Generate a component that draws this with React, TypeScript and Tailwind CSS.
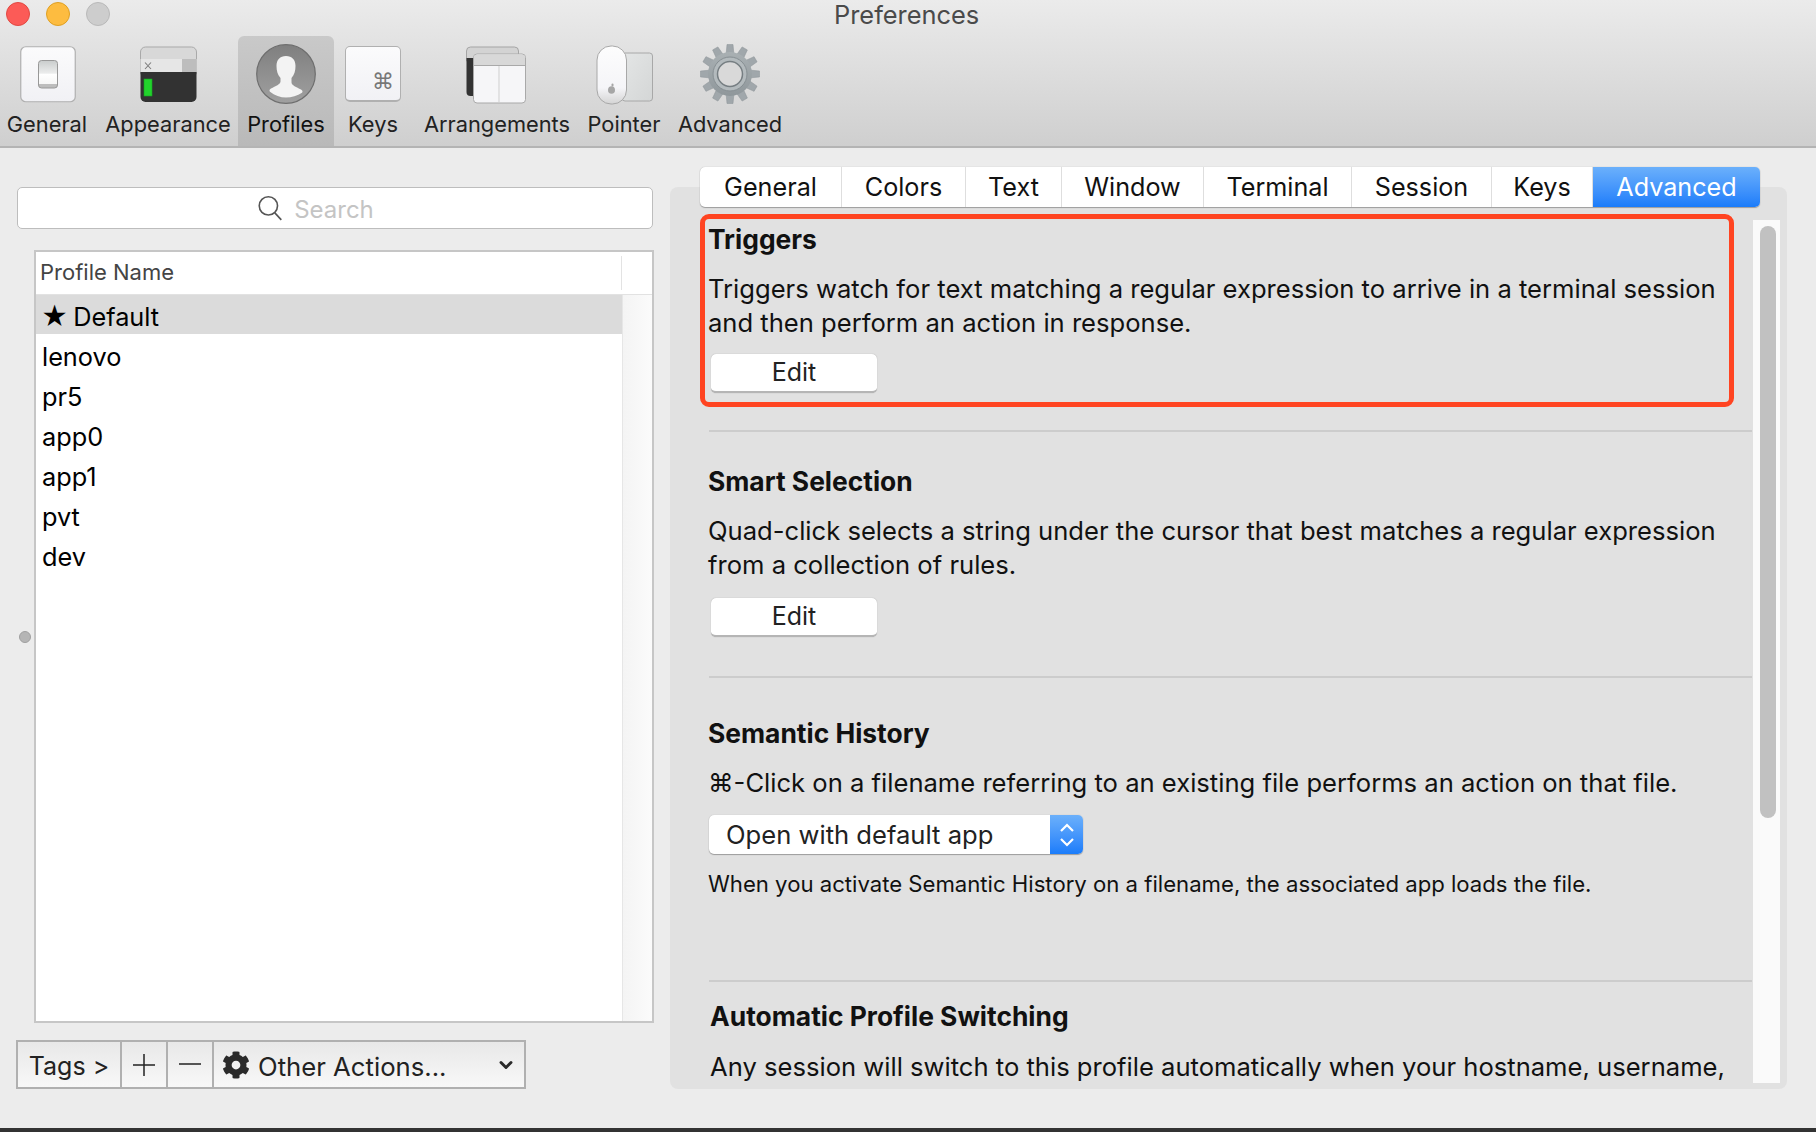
import { FaCog } from "react-icons/fa";
import { ChevronDown } from "lucide-react";

const font = "font-['Inter','DejaVu_Sans',sans-serif]";

function GeneralIcon() {
  return (
    <svg width="56" height="58" viewBox="0 0 56 58">
      <defs>
        <linearGradient id="gk" x1="0" y1="0" x2="0" y2="1"><stop offset="0" stopColor="#fbfbfc" /><stop offset="1" stopColor="#f1f1f5" /></linearGradient>
        <linearGradient id="gs" x1="0" y1="0" x2="0" y2="1"><stop offset="0" stopColor="#c9cccc" /><stop offset="0.47" stopColor="#eceded" /><stop offset="0.48" stopColor="#fff" /><stop offset="0.86" stopColor="#f6f6f6" /><stop offset="0.87" stopColor="#bdbdbd" /></linearGradient>
      </defs>
      <rect x="0.75" y="0.75" width="54.5" height="55" rx="5" fill="url(#gk)" stroke="#b0b0b0" strokeWidth="1.2" />
      <rect x="18.500" y="14.500" width="19" height="27.500" rx="3" fill="url(#gs)" stroke="#989898" strokeWidth="1" />
    </svg>
  );
}

function AppearanceIcon() {
  return (
    <svg width="57" height="58" viewBox="0 0 57 58">
      <path d="M0.5 6a5 5 0 0 1 5-5h46a5 5 0 0 1 5 5v22H0.5z" fill="#d8d8d8" stroke="#a9a9a9" />
      <rect x="0.5" y="13" width="56" height="13" fill="#e6e6e6" />
      <rect x="42" y="13" width="14.500" height="13" fill="#bdbdbd" />
      <path d="M5 16.500l6 6.500M11 16.500l-6 6.500" stroke="#7c7c7c" strokeWidth="1.100" />
      <path d="M0.5 26h56v25a5 5 0 0 1-5 5h-46a5 5 0 0 1-5-5z" fill="#323232" />
      <rect x="4" y="33" width="8" height="17" fill="#22d32c" stroke="#16a322" strokeWidth="0.6" />
    </svg>
  );
}

function ProfilesIcon() {
  return (
    <svg width="60" height="60" viewBox="0 0 60 60">
      <defs>
        <linearGradient id="pb" x1="0" y1="0" x2="0" y2="1"><stop offset="0" stopColor="#7f7f7f" /><stop offset="1" stopColor="#a0a0a0" /></linearGradient>
      </defs>
      <circle cx="30" cy="30" r="29.300" fill="url(#pb)" stroke="#6e6e6e" strokeWidth="1.200" />
      <path d="M30 12c-6 0-9.500 3.800-9.500 10 0 5 1.200 9 4 12v3.500c0 2.800-5 4.700-9.500 7-1.500.8-2 2.200-1 3.200C18.500 51.500 24.500 53.500 30 53.500s11.500-2 16-4.800c1-1 .5-2.400-1-3.200-4.500-2.300-9.500-4.200-9.500-7V34c2.800-3 4-7 4-12 0-6.200-3.500-10-9.500-10z" fill="#f3f3f3" />
    </svg>
  );
}

function KeysIcon() {
  return (
    <div className="w-[56px] h-[56px] rounded-[5px] border border-[#b0b0b0] bg-gradient-to-b from-[#fbfbfc] to-[#f1f1f5] border-b-[2px] flex items-end justify-end pr-[6px] pb-[6px]">
      <span className="text-[22px] leading-[24px] text-[#777] font-['DejaVu_Sans',sans-serif]">⌘</span>
    </div>
  );
}

function ArrangementsIcon() {
  return (
    <svg width="60" height="58" viewBox="0 0 60 58">
      <path d="M0.500 5a4 4 0 0 1 4-4h44a4 4 0 0 1 4 4v10H0.500z" fill="#d3d3d3" stroke="#a5a5a5" />
      <path d="M0.500 12h20v38h-16a4 4 0 0 1-4-4z" fill="#333" />
      <rect x="7.500" y="8" width="52" height="49" rx="3.500" fill="#f6f6f8" stroke="#a9a9a9" />
      <path d="M8 11.500a3 3 0 0 1 3-3h45a3 3 0 0 1 3 3V19H8z" fill="#d8d8d8" />
      <path d="M8 19.500h51" stroke="#a9a9a9" />
      <path d="M33 20v37" stroke="#cfcfcf" />
    </svg>
  );
}

function PointerIcon() {
  return (
    <svg width="58" height="60" viewBox="0 0 58 60">
      <defs>
        <linearGradient id="pm" x1="0" y1="0" x2="0" y2="1"><stop offset="0" stopColor="#fdfdfd" /><stop offset="0.72" stopColor="#f5f5f8" /><stop offset="1" stopColor="#d4d4d4" /></linearGradient>
        <linearGradient id="pp" x1="0" y1="0" x2="1" y2="1"><stop offset="0" stopColor="#e4e6e6" /><stop offset="1" stopColor="#d4d6d6" /></linearGradient>
      </defs>
      <rect x="26" y="8" width="30.500" height="48" rx="3" fill="url(#pp)" stroke="#a8a8a8" />
      <rect x="1" y="1" width="29.500" height="58" rx="14" fill="url(#pm)" stroke="#a8a8a8" />
      <ellipse cx="15.500" cy="45" rx="3.500" ry="3.800" fill="#a6a6a6" />
      <rect x="15.500" y="38.500" width="2" height="3" rx="1" fill="#a6a6a6" />
    </svg>
  );
}

const toothAngles = [0, 30, 60, 90, 120, 150, 180, 210, 240, 270, 300, 330];

function GearIcon() {
  return (
    <svg width="60" height="60" viewBox="0 0 60 60">
      <defs>
        <linearGradient id="gg" x1="0" y1="0" x2="0" y2="1"><stop offset="0" stopColor="#a9b0b3" /><stop offset="1" stopColor="#8f979b" /></linearGradient>
      </defs>
      {toothAngles.map((a) => (
        <path key={a} d="M27 0.500h6l1 11h-8z" fill="#a0a7ab" stroke="#8b9296" strokeWidth="0.500" transform={`rotate(${a} 30 30)`} />
      ))}
      <circle cx="30" cy="30" r="22" fill="url(#gg)" />
      <circle cx="30" cy="30" r="17" fill="#b3babd" stroke="#878f93" strokeWidth="1" />
      <circle cx="30" cy="30" r="12.500" fill="#d9d9d9" stroke="#767e82" strokeWidth="1.500" />
    </svg>
  );
}

function ToolItem({ icon, label, className, selected, iconClass }: { icon: React.ReactNode; label: string; className: string; selected?: boolean; iconClass: string }) {
  return (
    <div className={`flex flex-col items-center h-[110px] shrink-0 ${selected ? "bg-gradient-to-b from-[#c9c9c9] to-[#b9b9b9] rounded-t-[6px] text-[#111]" : "text-[#222]"} ${className}`}>
      <div className={`h-[68px] flex items-start justify-center ${iconClass}`}>{icon}</div>
      <div className="text-[21.8px] leading-[26px] mt-[7px] whitespace-nowrap">{label}</div>
    </div>
  );
}

function Section({ title, children, className }: { title: string; children: React.ReactNode; className?: string }) {
  return (
    <div className={className}>
      <div className="text-[26.4px] leading-[34px] font-bold text-[#111]">{title}</div>
      {children}
    </div>
  );
}

function EditButton() {
  return (
    <div className="w-[166px] h-[39px] rounded-[5px] bg-white border-b-2 border-[#b5b5b5] shadow-[0_0_1px_#999] flex items-center justify-center pt-[1px] text-[25px] text-[#222]">Edit</div>
  );
}

const tabs = [
  { t: "General", w: "w-[142px]" },
  { t: "Colors", w: "w-[124px]" },
  { t: "Text", w: "w-[96px]" },
  { t: "Window", w: "w-[142px]" },
  { t: "Terminal", w: "w-[148px]" },
  { t: "Session", w: "w-[140px]" },
  { t: "Keys", w: "w-[101px]" },
];

const profiles = ["lenovo", "pr5", "app0", "app1", "pvt", "dev"];

export default function App() {
  return (
    <div className={`${font} w-[1816px] h-[1132px] flex flex-col overflow-hidden bg-[#ececec] text-black`}>
      {/* toolbar */}
      <div className="h-[148px] shrink-0 bg-gradient-to-b from-[#ebebeb] to-[#cfcfcf] border-b-2 border-[#b4b4b4] flex flex-col">
        <div className="h-[36px] shrink-0 flex items-start pl-[6px] pt-[2px] gap-[16px]">
          <div className="w-[24px] h-[24px] rounded-full bg-[#fc5b57] border border-[#e14942]" />
          <div className="w-[24px] h-[24px] rounded-full bg-[#fdbc40] border border-[#dfa023]" />
          <div className="w-[24px] h-[24px] rounded-full bg-[#cdcdcd] border border-[#b9b9b9]" />
          <div className="ml-[708px] -mt-[2px] text-[25.4px] leading-[30px] text-[#4a4a4a]">Preferences</div>
        </div>
        <div className="flex items-start">
          <ToolItem icon={<GeneralIcon />} label="General" className="w-[82px] ml-[6px]" iconClass="pt-[10px] pl-[2px]" />
          <ToolItem icon={<AppearanceIcon />} label="Appearance" className="w-[126px] ml-[17px]" iconClass="pt-[10px]" />
          <ToolItem icon={<ProfilesIcon />} label="Profiles" className="w-[96px] ml-[7px]" selected iconClass="pt-[8px]" />
          <ToolItem icon={<KeysIcon />} label="Keys" className="w-[56px] ml-[11px]" iconClass="pt-[10px]" />
          <ToolItem icon={<ArrangementsIcon />} label="Arrangements" className="w-[148px] ml-[22px]" iconClass="pt-[10px] pr-[2px]" />
          <ToolItem icon={<PointerIcon />} label="Pointer" className="w-[78px] ml-[14px]" iconClass="pt-[9px] pl-[2px]" />
          <ToolItem icon={<GearIcon />} label="Advanced" className="w-[100px] ml-[17px]" iconClass="pt-[8px]" />
        </div>
      </div>

      {/* main */}
      <div className="flex-1 min-h-0 flex">
        {/* left */}
        <div className="w-[670px] shrink-0 pt-[39px] flex flex-col">
          <div className="ml-[17px] w-[636px] h-[42px] rounded-[5px] bg-white border border-[#bdbdbd] flex items-center justify-center gap-[10px] pr-[40px]">
            <svg width="28" height="28" viewBox="0 0 26 26" fill="none" stroke="#555" strokeWidth="1.500">
              <circle cx="11.500" cy="11" r="8.500" />
              <path d="M17.500 17.500l6 6.500" />
            </svg>
            <span className="text-[24px] pt-[3px] text-[#c4c4c4]">Search</span>
          </div>
          <div className="mt-[21px] flex items-center">
            <div className="w-[34px] shrink-0 flex justify-center pl-[16px]">
              <div className="w-[12px] h-[12px] shrink-0 rounded-full bg-[#b5b5b5] border border-[#a0a0a0]" />
            </div>
            <div className="w-[620px] h-[773px] border-2 border-[#c6c6c6] bg-white flex flex-col">
              <div className="h-[43px] shrink-0 flex items-center border-b border-[#e2e2e2] py-[4px]">
                <div className="w-[586px] h-full border-r border-[#e3e3e3] flex items-center pl-[4px] pb-[2px] text-[22px] text-[#444]">Profile Name</div>
              </div>
              <div className="flex-1 flex min-h-0">
                <div className="w-[586px] flex flex-col text-[25.3px] leading-[40px]">
                  <div className="h-[39px] bg-[#dbdbdb] pl-[5px] pt-[4px] flex items-center gap-[5px]"><span className="text-[26px]">★</span> Default</div>
                  {profiles.map((p) => (
                    <div key={p} className="h-[40px] pl-[6px] pt-[6px] flex items-center">{p}</div>
                  ))}
                </div>
                <div className="flex-1 bg-gradient-to-r from-[#f4f4f4] to-[#fbfbfb] border-l border-[#e6e6e6]" />
              </div>
            </div>
          </div>
          <div className="mt-[17px] ml-[16px] w-[510px] h-[49px] border-2 border-[#b0b0b0] bg-gradient-to-b from-[#e8e8e8] to-[#f8f8f8] flex text-[#222]">
            <div className="w-[104px] shrink-0 border-r-2 border-[#b0b0b0] flex items-center justify-center pt-[5px] text-[25px]">Tags &gt;</div>
            <div className="w-[46px] shrink-0 border-r-2 border-[#b0b0b0] flex items-center justify-center">
              <svg width="24" height="24" viewBox="0 0 24 24" stroke="#222" strokeWidth="1.500"><path d="M12 1v22M1 12h22" /></svg>
            </div>
            <div className="w-[46px] shrink-0 border-r-2 border-[#b0b0b0] flex items-center justify-center">
              <svg width="24" height="24" viewBox="0 0 24 24" stroke="#222" strokeWidth="1.500"><path d="M1 11h22" /></svg>
            </div>
            <div className="flex-1 flex items-center pl-[8px] pr-[8px]">
              <FaCog size={28} color="#2a2a2a" />
              <span className="ml-[8px] pt-[5px] text-[25.7px] flex-1">Other Actions...</span>
              <ChevronDown size={20} strokeWidth={3.500} color="#2a2a2a" />
            </div>
          </div>
        </div>

        {/* right */}
        <div className="w-[1118px] shrink-0 pt-[19px] flex flex-col">
          <div className="ml-[30px] w-[1060px] h-[40px] shrink-0 z-10 flex rounded-[5px] bg-white shadow-[0_1px_1px_#9c9c9c,0_0_1px_#aaa] text-[25.2px] text-[#111] overflow-hidden">
            {tabs.map((x) => (
              <div key={x.t} className={`${x.w} shrink-0 flex items-center justify-center pt-[2px] border-r border-[#dedede]`}>{x.t}</div>
            ))}
            <div className="flex-1 flex items-center justify-center pt-[2px] text-white bg-gradient-to-b from-[#6bb0fb] to-[#1a7cfa]">Advanced</div>
          </div>
          <div className="-mt-[20px] w-[1117px] h-[902px] shrink-0 bg-[#e1e1e1] rounded-[8px] pt-[27px] pb-[6px] pl-[30px] pr-[7px] flex overflow-hidden">
            <div className="w-[1052px] shrink-0 overflow-hidden">
              <div className="w-[1034px] h-[193px] rounded-[9px] border-[5px] border-[#ff4421] pl-[3px] pt-[3px]">
                <Section title="Triggers">
                  <div className="mt-[16px] text-[25.6px] leading-[34px] text-[#111]">
                    Triggers watch for text matching a regular expression to arrive in a terminal session
                    <br />
                    and then perform an action in response.
                  </div>
                  <div className="mt-[14px] ml-[3px]"><EditButton /></div>
                </Section>
              </div>
              <div className="mt-[23px] ml-[9px] h-[2px] bg-[#cccccc]" />
              <Section title="Smart Selection" className="mt-[32px] ml-[8px]">
                <div className="mt-[16px] text-[25.6px] leading-[34px] text-[#111]">
                  Quad-click selects a string under the cursor that best matches a regular expression
                  <br />
                  from a collection of rules.
                </div>
                <div className="mt-[16px] ml-[3px]"><EditButton /></div>
              </Section>
              <div className="mt-[39px] ml-[9px] h-[2px] bg-[#cccccc]" />
              <Section title="Semantic History" className="mt-[38px] ml-[8px]">
                <div className="mt-[16px] text-[25.6px] leading-[34px] text-[#111]">
                  ⌘-Click on a filename referring to an existing file performs an action on that file.
                </div>
                <div className="mt-[15px] ml-[1px] w-[374px] h-[39px] rounded-[5px] bg-white shadow-[0_1px_1px_#9c9c9c,0_0_1px_#aaa] flex overflow-hidden">
                  <div className="flex-1 flex items-center pl-[17px] pt-[1px] text-[25.6px] text-[#222]">Open with default app</div>
                  <div className="w-[33px] bg-gradient-to-b from-[#6bb0fb] to-[#1a7cfa] flex items-center justify-center">
                    <svg width="16" height="28" viewBox="0 0 16 28" fill="none" stroke="#fff" strokeWidth="2.200"><path d="M2 10l6-6 6 6M2 18l6 6 6-6" /></svg>
                  </div>
                </div>
                <div className="mt-[13px] text-[22.15px] leading-[34px] text-[#111]">
                  When you activate Semantic History on a filename, the associated app loads the file.
                </div>
              </Section>
              <div className="mt-[79px] ml-[9px] h-[2px] bg-[#cccccc]" />
              <Section title="Automatic Profile Switching" className="mt-[17px] ml-[10px]">
                <div className="mt-[17px] text-[25.6px] leading-[34px] text-[#111] whitespace-nowrap">
                  Any session will switch to this profile automatically when your hostname, username,
                </div>
              </Section>
            </div>
            <div className="w-[27px] ml-[1px] mt-[6px] shrink-0 bg-[#fafafa] pl-[7px] pr-[4px] pt-[6px]">
              <div className="h-[592px] rounded-full bg-[#c1c1c1]" />
            </div>
          </div>
        </div>
      </div>
      <div className="h-[4px] shrink-0 bg-[#333]" />
    </div>
  );
}
